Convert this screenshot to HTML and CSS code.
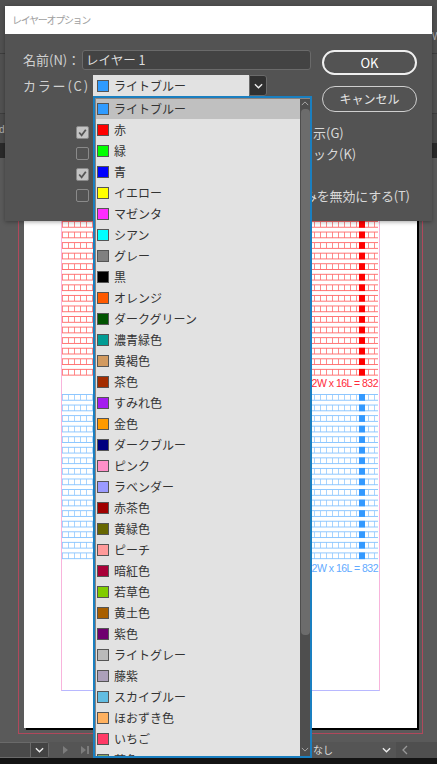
FILE: index.html
```html
<!DOCTYPE html>
<html lang="ja">
<head>
<meta charset="utf-8">
<title>レイヤーオプション</title>
<link rel="stylesheet" href="styles.css">
</head>
<body>
<main class="canvas">
  <div class="band band-top"></div>
  <div class="band band-dark"></div>
  <span class="edge edge-left">d</span>
  <span class="edge edge-right">W</span>
  <div class="bleed"></div>
  <div class="sheet">
    <div class="margin">
      <div class="grid grid-red"></div>
      <div class="count count-red">52W x 16L = 832</div>
      <div class="grid grid-blue"></div>
      <div class="count count-blue">52W x 16L = 832</div>
    </div>
  </div>
  <footer class="statusbar">
    <div class="page-select"><div class="page-btn"><svg class="chev" viewBox="0 0 10 6"><path d="M1 1l4 4 4-4"/></svg></div></div>
    <svg class="nav" viewBox="0 0 28 10"><path class="nav-fill" d="M1 1l5 4-5 4zM19 1l5 4-5 4zM25 1h2v8h-2z"/></svg>
    <span class="none">なし</span>
    <svg class="chev chev-status" viewBox="0 0 10 6"><path d="M1 1l4 4 4-4"/></svg>
    <div class="scroll-left"><svg class="back" viewBox="0 0 6 10"><path d="M5 1L1 5l4 4"/></svg></div>
  </footer>
</main>

<section class="dialog">
  <h1 class="title">レイヤーオプション</h1>
  <div class="body">
    <div class="fields">
      <div class="name-row">
        <label class="label">名前(N)：</label>
        <div class="input">レイヤー 1</div>
      </div>
      <div class="color-row">
        <label class="label label-color">カラー(C)：</label>
        <div class="select">
          <div class="select-value"><i class="sw sw-main"></i>ライトブルー</div>
          <div class="select-btn"><svg class="chev" viewBox="0 0 10 6"><path d="M1 1l4 4 4-4"/></svg></div>
        </div>
      </div>
      <div class="options">
        <div class="opt"><span class="check on"><svg viewBox="0 0 10 10"><path d="M2 5l2.2 2.6L8 2.5"/></svg></span><span class="opt-text">示(G)</span></div>
        <div class="opt"><span class="check"></span><span class="opt-text">ック(K)</span></div>
        <div class="opt"><span class="check on"><svg viewBox="0 0 10 10"><path d="M2 5l2.2 2.6L8 2.5"/></svg></span></div>
        <div class="opt"><span class="check"></span><span class="opt-text opt-text-wide">みを無効にする(T)</span></div>
      </div>
    </div>
    <div class="buttons">
      <button class="btn btn-ok">OK</button>
      <button class="btn btn-cancel">キャンセル</button>
    </div>
  </div>
</section>

<div class="dropdown">
  <ul class="list">
    <li class="row active"><i class="sw" style="background:#2f9bff"></i>ライトブルー</li>
    <li class="row"><i class="sw" style="background:#ff0000"></i>赤</li>
    <li class="row"><i class="sw" style="background:#00ff00"></i>緑</li>
    <li class="row"><i class="sw" style="background:#0000ff"></i>青</li>
    <li class="row"><i class="sw" style="background:#ffff00"></i>イエロー</li>
    <li class="row"><i class="sw" style="background:#ff2bff"></i>マゼンタ</li>
    <li class="row"><i class="sw" style="background:#00ffff"></i>シアン</li>
    <li class="row"><i class="sw" style="background:#808080"></i>グレー</li>
    <li class="row"><i class="sw" style="background:#000000"></i>黒</li>
    <li class="row"><i class="sw" style="background:#ff5a00"></i>オレンジ</li>
    <li class="row"><i class="sw" style="background:#005300"></i>ダークグリーン</li>
    <li class="row"><i class="sw" style="background:#009c94"></i>濃青緑色</li>
    <li class="row"><i class="sw" style="background:#d29a5f"></i>黄褐色</li>
    <li class="row"><i class="sw" style="background:#a32c00"></i>茶色</li>
    <li class="row"><i class="sw" style="background:#a41cf0"></i>すみれ色</li>
    <li class="row"><i class="sw" style="background:#ff9a00"></i>金色</li>
    <li class="row"><i class="sw" style="background:#00007f"></i>ダークブルー</li>
    <li class="row"><i class="sw" style="background:#ff8fc8"></i>ピンク</li>
    <li class="row"><i class="sw" style="background:#9a9aff"></i>ラベンダー</li>
    <li class="row"><i class="sw" style="background:#a00000"></i>赤茶色</li>
    <li class="row"><i class="sw" style="background:#666600"></i>黄緑色</li>
    <li class="row"><i class="sw" style="background:#ff9a9a"></i>ピーチ</li>
    <li class="row"><i class="sw" style="background:#a80038"></i>暗紅色</li>
    <li class="row"><i class="sw" style="background:#80cc00"></i>若草色</li>
    <li class="row"><i class="sw" style="background:#a85f00"></i>黄土色</li>
    <li class="row"><i class="sw" style="background:#6f006f"></i>紫色</li>
    <li class="row"><i class="sw" style="background:#bababa"></i>ライトグレー</li>
    <li class="row"><i class="sw" style="background:#aca0ba"></i>藤紫</li>
    <li class="row"><i class="sw" style="background:#62bde2"></i>スカイブルー</li>
    <li class="row"><i class="sw" style="background:#ffb15f"></i>ほおずき色</li>
    <li class="row"><i class="sw" style="background:#ff3a66"></i>いちご</li>
    <li class="row"><i class="sw" style="background:#8aa860"></i>葉色</li>
  </ul>
  <div class="scrollbar">
    <svg class="sb-arrow sb-up" viewBox="0 0 10 6"><path d="M1 5l4-4 4 4"/></svg>
    <div class="thumb"></div>
    <svg class="sb-arrow sb-down" viewBox="0 0 10 6"><path d="M1 1l4 4 4-4"/></svg>
  </div>
</div>
</body>
</html>
```
FILE: styles.css
```css
* { box-sizing: border-box; }
html, body { margin: 0; padding: 0; }
body {
  width: 437px;
  height: 764px;
  overflow: hidden;
  position: relative;
  background: #5a5a5a;
  font-family: "Noto Sans CJK JP", "Noto Sans", sans-serif;
  color: #d8d8d8;
}
.canvas { position: absolute; inset: 0; background: #5a5a5a; overflow: hidden; }
.band { position: absolute; left: 0; right: 0; }
.band-top {
  top: 0; height: 143px;
  background:
    linear-gradient(#3e3e3e, #3e3e3e) 0 53px / 100% 1px no-repeat,
    linear-gradient(#3e3e3e, #3e3e3e) 0 113px / 100% 1px no-repeat,
    linear-gradient(#4b4b4b, #4b4b4b) 0 114px / 100% 29px no-repeat,
    #515151;
}
.band-dark { top: 143px; height: 15px; background: #2a2a2a; }
.edge { position: absolute; font-family: "Liberation Sans", sans-serif; font-size: 10px; line-height: 12px; color: #b0b0b0; }
.edge-left { left: -1px; top: 124px; }
.edge-right { left: 432px; top: 31px; }
.bleed {
  position: absolute; left: 18px; top: 170px; width: 405px; height: 564px;
  border: 1px solid #b0485c;
}
.sheet {
  position: absolute; left: 24px; top: 170px; width: 393px; height: 558px;
  background: #fff;
  box-shadow: 2px 2px 0 #000;
}
.margin {
  position: absolute; left: 37px; top: 20px; width: 319px; height: 501px;
  border: 1px solid #f8b4dc;
  border-bottom-color: #b8b8ff;
}
.grid { position: absolute; left: 0; width: 316px; }
.grid-red {
  top: 30px; height: 155px;
  background:
    linear-gradient(#ff0000, #ff0000 7px, transparent 7px) 297px 0 / 6px 10.57px repeat-y,
    linear-gradient(#ff7070 0 1px, transparent 1px 6px, #ff7070 6px 7px, #fff 7px) 0 0 / 100% 10.57px repeat-y,
    repeating-linear-gradient(to right, #ff8a8a 0 1px, #fff 1px 6px);
}
.grid-blue {
  top: 203px; height: 166px;
  background:
    linear-gradient(#3399ff, #3399ff 7px, transparent 7px) 297px 0 / 6px 10.57px repeat-y,
    linear-gradient(#8cc6ff 0 1px, transparent 1px 6px, #8cc6ff 6px 7px, #fff 7px) 0 0 / 100% 10.57px repeat-y,
    repeating-linear-gradient(to right, #a8d4ff 0 1px, #fff 1px 6px);
}
.count {
  position: absolute; right: 1px; font-size: 10.5px; letter-spacing: -.5px; line-height: 12px;
  font-family: "Liberation Sans", sans-serif; white-space: nowrap;
}
.count-red { top: 186px; color: #ff2a3a; }
.count-blue { top: 371px; color: #62aaff; }
.statusbar {
  position: absolute; left: 0; right: 0; top: 742px; height: 16px;
  background: #555;
  box-shadow: 0 6px 0 #141414;
}
.page-select {
  position: absolute; left: 0; top: 0; width: 49px; height: 16px;
  background: #4a4a4a;
  border: 1px solid #6a6a6a; border-left: 0; border-radius: 0 3px 3px 0;
  display: flex; justify-content: flex-end;
}
.page-btn {
  width: 18px; border-left: 1px solid #6a6a6a; background: #434343;
  display: flex; align-items: center; justify-content: center;
}
.chev { width: 9px; height: 6px; fill: none; stroke: #eee; stroke-width: 1.5; }
.nav { position: absolute; left: 62px; top: 3px; width: 28px; height: 10px; }
.nav-fill { fill: #7c7c7c; }
.none { position: absolute; left: 313px; top: 0; font-size: 10px; line-height: 16px; color: #ddd; }
.chev-status { position: absolute; left: 382px; top: 5px; }
.scroll-left {
  position: absolute; left: 396px; top: 0; right: 0; height: 16px; background: #4f4f4f;
  padding: 3px 0 0 6px;
}
.back { width: 6px; height: 10px; fill: none; stroke: #999; stroke-width: 1.3; display: block; }

.dialog {
  position: absolute; left: 5px; top: 6px; width: 427px; height: 215px;
  background: #535353;
  box-shadow: 0 1px 4px rgba(0,0,0,.35);
}
.title {
  margin: 0; height: 28px; background: #fff; padding: 0 7px;
  font-size: 10px; letter-spacing: -1.3px; font-weight: 400; line-height: 28px; color: #a0a0a0;
}
.body { display: flex; padding: 16px 16px 0 18px; }
.fields { flex: 1; }
.label { font-size: 13px; line-height: 20px; color: #d0d0d0; white-space: nowrap; }
.label-color { letter-spacing: 1.8px; }
.name-row { display: flex; align-items: center; }
.name-row .label { width: 59px; }
.input {
  width: 229px; height: 20px; background: #434343; border: 1px solid #6a6a6a; border-radius: 3px;
  font-size: 12.5px; line-height: 18px; padding-left: 3px; color: #ddd;
}
.color-row { display: flex; align-items: center; margin-top: 5px; }
.color-row .label { width: 70px; }
.select { display: flex; width: 174px; height: 21px; border-radius: 3px; }
.select-value {
  width: 156px; background: #e2e2e2; color: #333; font-size: 12px; line-height: 20px;
  display: flex; align-items: center; padding-left: 4px;
}
.select-btn {
  width: 18px; background: #303030; border: 1px solid #6a6a6a; border-radius: 0 3px 3px 0;
  display: flex; align-items: center; justify-content: center;
}
.sw {
  flex: none; width: 12px; height: 12px; margin-right: 5px;
  border: 1px solid #555;
  display: inline-block;
}
.sw-main { background: #2f9bff; }
.options { margin: 30px 0 0 53px; display: flex; flex-direction: column; gap: 8px; }
.opt { display: flex; align-items: center; height: 13px; font-size: 13px; line-height: 13px; white-space: nowrap; }
.check {
  flex: none; width: 13px; height: 13px; border: 1px solid #8a8a8a; border-radius: 2px;
  background: #535353;
}
.check.on { background: #c4c4c4; }
.check svg { display: block; width: 11px; height: 11px; fill: none; stroke: #555; stroke-width: 1.6; }
.opt-text { color: #d8d8d8; margin-left: 224px; }
.opt-text-wide { margin-left: 215px; letter-spacing: -.2px; }
.buttons { position: absolute; left: 317px; top: 44px; display: flex; flex-direction: column; gap: 11px; }
.btn {
  width: 95px; height: 25px; background: transparent; border-radius: 13px;
  font-family: inherit; font-size: 13px; line-height: 1; color: #e4e4e4; padding: 0;
}
.btn-ok { border: 2px solid #efefef; color: #fff; }
.btn-cancel { height: 26px; border: 1px solid #cfcfcf; font-size: 12px; }

.dropdown {
  position: absolute; left: 93px; top: 96px; width: 219px; height: 662px;
  border: 2px solid #1a7fc0; background: #e2e2e2;
  display: flex; overflow: hidden;
}
.dropdown::after {
  content: ""; position: absolute; inset: 0;
  border-top: 1px solid #8c8480; border-left: 1px solid #8c8480;
  pointer-events: none;
}
.list { list-style: none; margin: 0; padding: 0; flex: 1; overflow: hidden; height: 658px; }
.row {
  height: 21px; display: flex; align-items: center; padding-left: 2px;
  font-size: 12px; line-height: 21px; color: #333; white-space: nowrap;
}
.row.active { background: #c0c0c0; }
.scrollbar { position: relative; width: 10px; flex: none; background: #4e4e4e; }
.thumb { position: absolute; left: 1px; right: 0; top: 11px; height: 526px; background: #6c6c6c; border-radius: 4px; }
.sb-arrow { position: absolute; left: 1px; width: 8px; height: 5px; fill: none; stroke: #aaa; stroke-width: 1.2; }
.sb-up { top: 3px; }
.sb-down { bottom: 4px; }
```
